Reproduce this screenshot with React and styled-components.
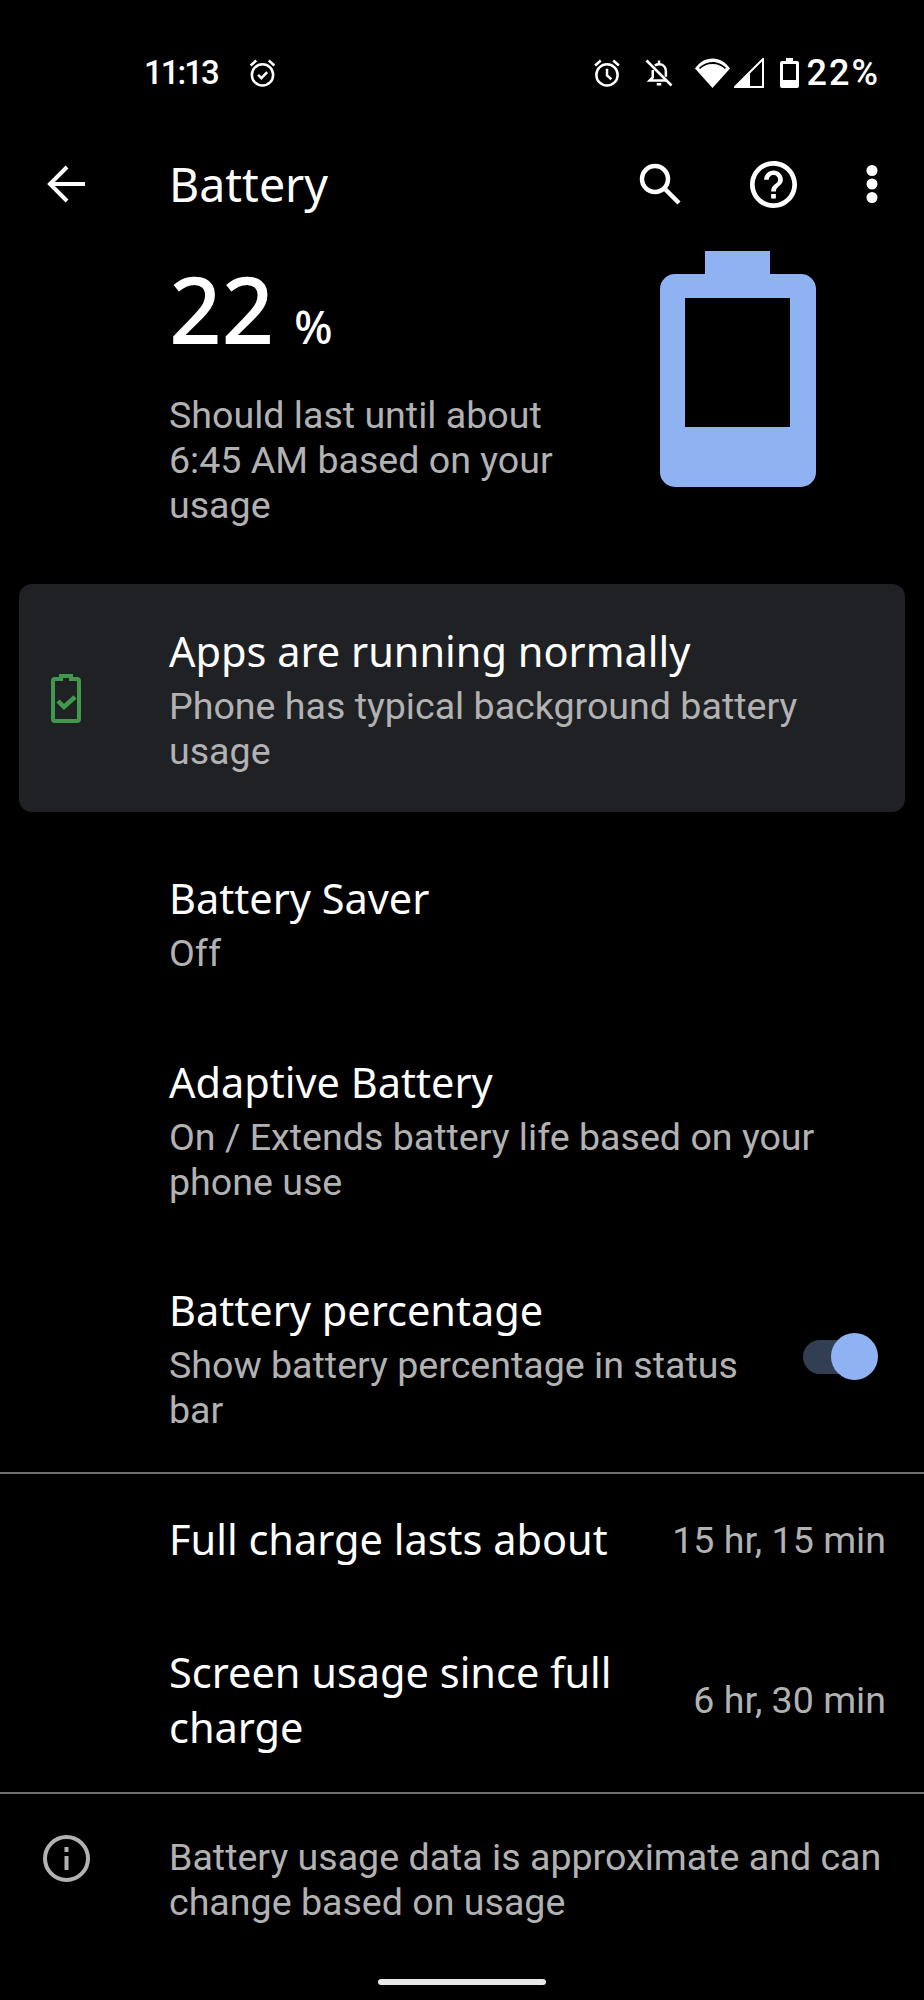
import styled, { createGlobalStyle } from "styled-components";

const Global = createGlobalStyle`
  html, body { margin: 0; padding: 0; background: #000; }
  * { box-sizing: border-box; }
`;

const Screen = styled.div`
  width: 924px;
  height: 2000px;
  background: #000;
  color: #fff;
  overflow: hidden;
  font-family: Roboto, "Liberation Sans", sans-serif;
`;

const StatusBar = styled.div`
  height: 146px;
  padding: 0 44px 0 144px;
  display: flex;
  align-items: center;
  justify-content: space-between;
`;
const StatusGroup = styled.div`
  display: flex;
  align-items: center;
`;
const StatusText = styled.span`
  font-size: ${(p) => p.$size}px;
  font-weight: 500;
  line-height: 30px;
  letter-spacing: ${(p) => p.$spacing || 0}px;
  margin-right: ${(p) => p.$right || 0}px;
`;
const StatusGap = styled.span`
  width: ${(p) => p.$width}px;
`;

const Toolbar = styled.div`
  height: 76px;
  display: flex;
  align-items: center;
  padding: 0 46px 0 47px;
`;
const ToolbarTitle = styled.div`
  flex: 1;
  margin-left: 84px;
  font-family: "Noto Sans", sans-serif;
  font-size: 46.500px;
  line-height: 76px;
`;
const ToolIcons = styled.div`
  display: flex;
  align-items: center;
  gap: 69px;
`;

const Header = styled.div`
  display: flex;
  justify-content: space-between;
  padding: 29px 108px 0 169px;
`;
const HeaderText = styled.div`
  width: 400px;
`;
const BigLevel = styled.div`
  display: flex;
  align-items: baseline;
  margin-top: 12px;
  height: 92px;
  font-family: "Noto Sans", sans-serif;
  line-height: 92px;
`;
const BigNumber = styled.span`
  font-size: 92px;
  font-weight: 500;
`;
const BigUnit = styled.span`
  font-size: 45px;
  font-weight: 500;
  margin-left: 20px;
`;
const Secondary = styled.div`
  font-size: 37.600px;
  line-height: 45px;
  color: #b2b2b2;
`;
const Description = styled(Secondary)`
  margin-top: 38px;
`;

const Card = styled.div`
  margin: 56px 19px 0;
  height: 228px;
  background: #202124;
  border-radius: 13px;
  display: flex;
  align-items: center;
  padding-left: 32px;
`;
const CardBody = styled.div`
  margin-left: 88px;
  padding-top: 4px;
  width: 700px;
`;

const Title = styled.div`
  font-family: "Noto Sans", sans-serif;
  font-size: 41.500px;
  line-height: 50px;
  margin-bottom: 8px;
`;

const List = styled.div`
  margin-top: 20px;
`;
const Row = styled.div`
  display: flex;
  align-items: center;
  justify-content: space-between;
  padding: 41px 38px ${(p) => p.$bottom ?? 40}px 169px;
`;
const RowText = styled.div`
  width: ${(p) => p.$width || 700}px;
`;

const Switch = styled.div`
  position: relative;
  flex: none;
  width: 65px;
  height: 34px;
  margin-right: 18px;
  top: -2px;
  border-radius: 17px;
  background: #323e52;
`;
const Thumb = styled.div`
  position: absolute;
  top: -7px;
  left: 28px;
  width: 47px;
  height: 47px;
  border-radius: 50%;
  background: #8fb3f2;
`;

const Divider = styled.div`
  height: 2px;
  background: #6f6f6f;
`;

const StatRow = styled.div`
  display: flex;
  align-items: center;
  justify-content: space-between;
  padding: ${(p) => p.$top}px 38px ${(p) => p.$bottom}px 169px;
`;
const StatLabel = styled.div`
  width: ${(p) => p.$width}px;
  font-family: "Noto Sans", sans-serif;
  font-size: 41.500px;
  line-height: 55px;
`;
const StatValue = styled.div`
  font-size: 37.600px;
  color: #b2b2b2;
`;

const Footer = styled.div`
  display: flex;
  padding: 41px 20px 0 43px;
`;
const FooterText = styled(Secondary)`
  margin-left: 79px;
`;
const HomePill = styled.div`
  width: 168px;
  height: 6px;
  margin: 54px auto 0;
  border-radius: 3px;
  background: #e8e8e8;
`;

const AlarmCheck = () => (
  <svg width="31" height="30" viewBox="0 0 24 24" fill="none" stroke="#fff" strokeWidth="2">
    <circle cx="12" cy="13.500" r="8.500" />
    <path d="M2.500 6 7 2M21.500 6 17 2M8.500 13.500l2.600 2.600 4.600-4.800" />
  </svg>
);
const AlarmClock = () => (
  <svg width="30" height="30" viewBox="0 0 24 24" fill="none" stroke="#fff" strokeWidth="2">
    <circle cx="12" cy="13.500" r="8.500" />
    <path d="M2.500 6 7 2M21.500 6 17 2M12 8.500v5.500l3.500 3" />
  </svg>
);
const BellOff = () => (
  <svg width="30" height="30" viewBox="0 0 24 24" fill="none" stroke="#fff" strokeWidth="2">
    <path d="M17.500 15V10.500c0-3-2-5.500-5.500-5.500-1.300 0-2.400.4-3.300 1M7 9.500v6L4.500 18h13.500" />
    <path d="M12 2v3M10.200 21h3.600M2 2l20 20" />
  </svg>
);
const Wifi = () => (
  <svg width="35" height="30" viewBox="0 0 35 30">
    <path d="M17.500 30 0 10.500C4.500 4 10.500.5 17.500.5S30.500 4 35 10.500z" fill="#fff" />
    <path d="M17.500 6C12 6 8 8 5 11l-1-1.200C7.500 6.500 12 4 17.500 4S27.500 6.500 31 9.800L30 11c-3-3-7-5-12.500-5z" fill="#000" />
  </svg>
);
const Signal = () => (
  <svg width="30" height="30" viewBox="0 0 30 30">
    <path d="M29 1v28H1z" fill="none" stroke="#fff" strokeWidth="2" />
    <path d="M16 15v14H1z" fill="#fff" />
  </svg>
);
const StatusBattery = () => (
  <svg width="19" height="30" viewBox="0 0 19 30">
    <path d="M6 0h7v3h4a2 2 0 0 1 2 2v23a2 2 0 0 1-2 2H2a2 2 0 0 1-2-2V5a2 2 0 0 1 2-2h4z" fill="#fff" />
    <rect x="3" y="6" width="13" height="16" fill="#000" />
  </svg>
);

const BackIcon = () => (
  <svg width="38" height="38" viewBox="0 0 38 38" fill="none" stroke="#fff" strokeWidth="4">
    <path d="M38 19H3M20 2 3 19l17 17" />
  </svg>
);
const SearchIcon = () => (
  <svg width="42" height="42" viewBox="0 0 42 42" fill="none" stroke="#fff" strokeWidth="4.500">
    <circle cx="16" cy="16" r="13" />
    <path d="m25.500 25.500 14.500 14.500" />
  </svg>
);
const HelpIcon = () => (
  <svg width="47" height="47" viewBox="0 0 24 24" fill="#fff">
    <path d="M12 2C6.480 2 2 6.480 2 12s4.480 10 10 10 10-4.480 10-10S17.520 2 12 2zm0 18c-4.410 0-8-3.590-8-8s3.590-8 8-8 8 3.590 8 8-3.590 8-8 8zm-1-4h2v2h-2zm1-10c-2.210 0-4 1.790-4 4h2c0-1.100.9-2 2-2s2 .9 2 2c0 2-3 1.750-3 5h2c0-2.250 3-2.500 3-5 0-2.210-1.790-4-4-4z" transform="translate(12 12) scale(1.2) translate(-12 -12)" />
  </svg>
);
const MoreIcon = () => (
  <svg width="12" height="38" viewBox="0 0 12 38" fill="#fff">
    <circle cx="6" cy="5.500" r="5.500" />
    <circle cx="6" cy="19" r="5.500" />
    <circle cx="6" cy="32.500" r="5.500" />
  </svg>
);

const BigBattery = () => (
  <svg width="156" height="236" viewBox="0 0 156 236">
    <path
      fillRule="evenodd"
      fill="#8fb3f2"
      d="M45 0h65v23h31a15 15 0 0 1 15 15v183a15 15 0 0 1-15 15H15a15 15 0 0 1-15-15V38a15 15 0 0 1 15-15h30zM25 47v129h105V47z"
    />
  </svg>
);
const OkBattery = () => (
  <svg width="30" height="49" viewBox="0 0 30 49" fill="none" stroke="#3f9a4b">
    <path strokeWidth="4" d="M10 5V2h10v3h6a2 2 0 0 1 2 2v38a2 2 0 0 1-2 2H4a2 2 0 0 1-2-2V7a2 2 0 0 1 2-2z" />
    <path strokeWidth="4.500" d="m7 27 6 6 11-10" />
  </svg>
);
const InfoIcon = () => (
  <svg width="47" height="47" viewBox="0 0 47 47" fill="none" stroke="#b2b2b2" strokeWidth="4" style={{ flex: "none" }}>
    <circle cx="23.500" cy="23.500" r="21.500" />
    <path d="M23.500 21v14M23.500 12v5" />
  </svg>
);

export default function App() {
  return (
    <Screen>
      <Global />
      <StatusBar>
        <StatusGroup>
          <StatusText $size={33} $spacing={-2} $right={29}>11:13</StatusText>
          <AlarmCheck />
        </StatusGroup>
        <StatusGroup>
          <AlarmClock />
          <StatusGap $width={22} />
          <BellOff />
          <StatusGap $width={21} />
          <Wifi />
          <StatusGap $width={4} />
          <Signal />
          <StatusGap $width={16} />
          <StatusBattery />
          <StatusGap $width={8} />
          <StatusText $size={36} $spacing={2}>22%</StatusText>
        </StatusGroup>
      </StatusBar>

      <Toolbar>
        <BackIcon />
        <ToolbarTitle>Battery</ToolbarTitle>
        <ToolIcons>
          <SearchIcon />
          <HelpIcon />
          <MoreIcon />
        </ToolIcons>
      </Toolbar>

      <Header>
        <HeaderText>
          <BigLevel>
            <BigNumber>22</BigNumber>
            <BigUnit>%</BigUnit>
          </BigLevel>
          <Description>Should last until about 6:45 AM based on your usage</Description>
        </HeaderText>
        <BigBattery />
      </Header>

      <Card>
        <OkBattery />
        <CardBody>
          <Title>Apps are running normally</Title>
          <Secondary>Phone has typical background battery usage</Secondary>
        </CardBody>
      </Card>

      <List>
        <Row>
          <RowText>
            <Title>Battery Saver</Title>
            <Secondary>Off</Secondary>
          </RowText>
        </Row>
        <Row $bottom={39}>
          <RowText>
            <Title>Adaptive Battery</Title>
            <Secondary>On / Extends battery life based on your phone use</Secondary>
          </RowText>
        </Row>
        <Row $bottom={39}>
          <RowText $width={600}>
            <Title>Battery percentage</Title>
            <Secondary>Show battery percentage in status bar</Secondary>
          </RowText>
          <Switch>
            <Thumb />
          </Switch>
        </Row>
      </List>

      <Divider />
      <StatRow $top={38} $bottom={39}>
        <StatLabel $width={480}>Full charge lasts about</StatLabel>
        <StatValue>15 hr, 15 min</StatValue>
      </StatRow>
      <StatRow $top={39} $bottom={37}>
        <StatLabel $width={480}>Screen usage since full charge</StatLabel>
        <StatValue>6 hr, 30 min</StatValue>
      </StatRow>
      <Divider />

      <Footer>
        <InfoIcon />
        <FooterText>Battery usage data is approximate and can change based on usage</FooterText>
      </Footer>
      <HomePill />
    </Screen>
  );
}
